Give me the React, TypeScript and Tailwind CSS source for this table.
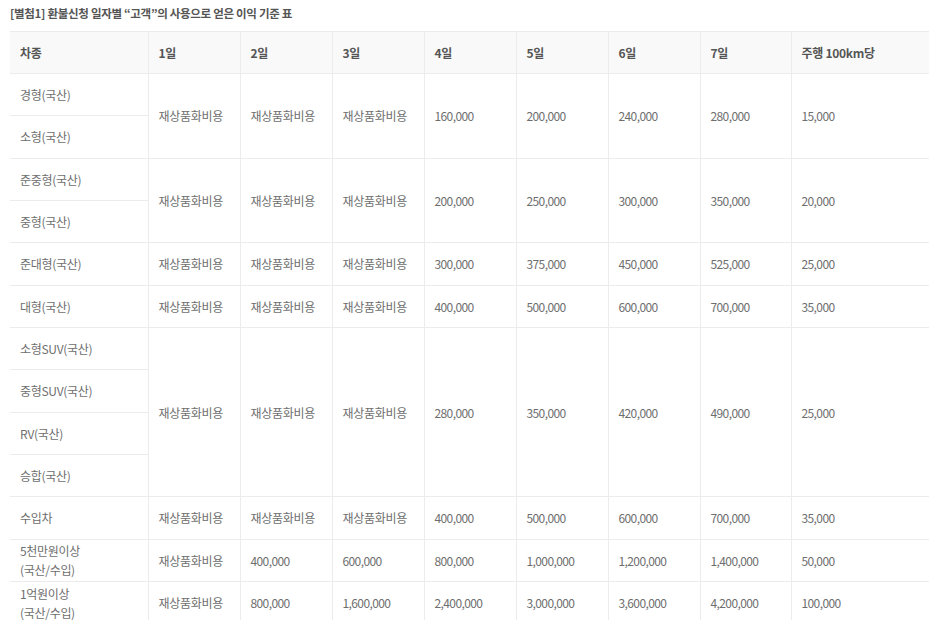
import React from "react";

const R = "재상품화비용";

const rows: { name: React.ReactNode; cells?: string[]; span?: number }[] = [
  { name: "경형(국산)", cells: [R, R, R, "160,000", "200,000", "240,000", "280,000", "15,000"], span: 2 },
  { name: "소형(국산)" },
  { name: "준중형(국산)", cells: [R, R, R, "200,000", "250,000", "300,000", "350,000", "20,000"], span: 2 },
  { name: "중형(국산)" },
  { name: "준대형(국산)", cells: [R, R, R, "300,000", "375,000", "450,000", "525,000", "25,000"] },
  { name: "대형(국산)", cells: [R, R, R, "400,000", "500,000", "600,000", "700,000", "35,000"] },
  { name: "소형SUV(국산)", cells: [R, R, R, "280,000", "350,000", "420,000", "490,000", "25,000"], span: 4 },
  { name: "중형SUV(국산)" },
  { name: "RV(국산)" },
  { name: "승합(국산)" },
  { name: "수입차", cells: [R, R, R, "400,000", "500,000", "600,000", "700,000", "35,000"] },
  {
    name: (
      <>
        5천만원이상
        <br />
        (국산/수입)
      </>
    ),
    cells: [R, "400,000", "600,000", "800,000", "1,000,000", "1,200,000", "1,400,000", "50,000"],
  },
  {
    name: (
      <>
        1억원이상
        <br />
        (국산/수입)
      </>
    ),
    cells: [R, "800,000", "1,600,000", "2,400,000", "3,000,000", "3,600,000", "4,200,000", "100,000"],
  },
];

const headers = ["차종", "1일", "2일", "3일", "4일", "5일", "6일", "7일", "주행 100km당"];
const widths = [138, 92, 92, 92, 92, 92, 92, 91, 138];

export default function App() {
  return (
    <div
      className="bg-white w-[936px] h-[620px] overflow-hidden px-[10px]"
      style={{ fontFamily: '"Noto Sans CJK KR", "Noto Sans", sans-serif' }}
    >
      <div className="h-[31px] pt-[4px] text-[11.5px] font-bold text-[#555] leading-[18px] tracking-[-0.3px]">
        [별첨1] 환불신청 일자별 “고객”의 사용으로 얻은 이익 기준 표
      </div>
      <table className="border-collapse table-fixed w-[919px] text-[12px] leading-[19px] text-[#6e6e6e]">
        <colgroup>
          {widths.map((w, i) => (
            <col key={i} style={{ width: w }} />
          ))}
        </colgroup>
        <thead>
          <tr className="bg-[#f9f9f9]">
            {headers.map((h, i) => (
              <th
                key={i}
                className={`h-[42px] px-[10px] text-left font-bold text-[#555] tracking-[-0.3px] border-t border-b border-[#ececec] ${
                  i > 0 ? "border-l" : ""
                }`}
              >
                {h}
              </th>
            ))}
          </tr>
        </thead>
        <tbody>
          {rows.map((r, ri) => (
            <tr key={ri}>
              <td className="h-[42.33px] px-[10px] py-0 border-b border-[#ececec] align-middle tracking-[-0.3px]">
                {r.name}
              </td>
              {r.cells &&
                r.cells.map((c, ci) => (
                  <td
                    key={ci}
                    rowSpan={r.span}
                    className={`px-[10px] py-0 border-b border-l border-[#ececec] align-middle ${
                      c === R ? "tracking-[-0.3px]" : "tracking-[-0.6px]"
                    }`}
                  >
                    {c}
                  </td>
                ))}
            </tr>
          ))}
        </tbody>
      </table>
    </div>
  );
}
